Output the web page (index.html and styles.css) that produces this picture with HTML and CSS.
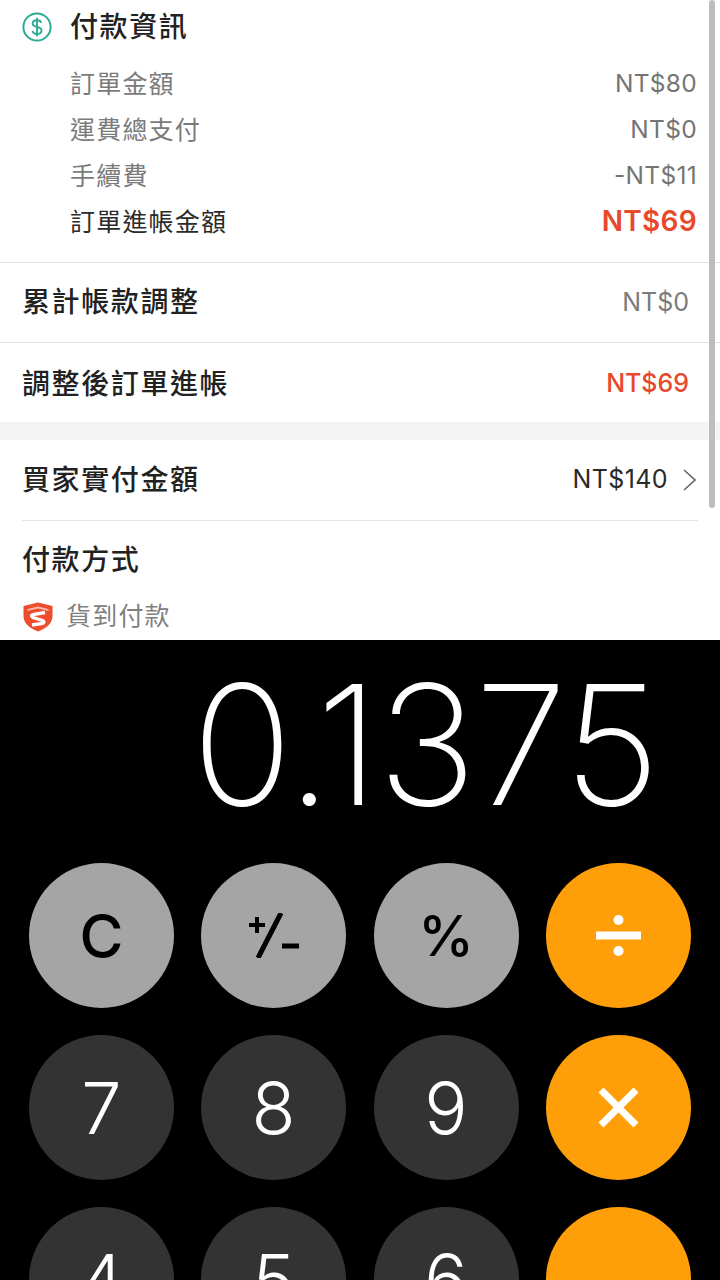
FILE: index.html
```html
<!DOCTYPE html>
<html lang="zh-Hant">
<head>
    <meta charset="UTF-8">
    <meta name="viewport" content="width=device-width, initial-scale=1.0">
    <title>付款資訊</title>
    <link rel="stylesheet" href="styles.css">
</head>
<body>

    <!-- Order payment panel -->
    <div class="panel">
        <div class="scrollbar"></div>

        <div class="section-head">
            <svg class="dollar-icon" viewBox="0 0 30 30">
                <circle cx="15" cy="15" r="13.6" fill="none" stroke="#2bab94" stroke-width="2"/>
                <path d="M19.2 10.8c-.5-1.7-2.2-2.6-4.2-2.6-2.400 0-4.300 1.300-4.300 3.400 0 2 1.700 2.800 4.300 3.400 2.700.6 4.500 1.400 4.500 3.500 0 2.200-2 3.500-4.500 3.500-2.200 0-4-1-4.500-2.900M15 5.800v18.400" fill="none" stroke="#2bab94" stroke-width="1.900"/>
            </svg>
            <span class="title">付款資訊</span>
        </div>

        <div class="detail-list">
            <div class="detail-row"><span class="label">訂單金額</span><span class="num">NT$80</span></div>
            <div class="detail-row"><span class="label">運費總支付</span><span class="num">NT$0</span></div>
            <div class="detail-row"><span class="label">手續費</span><span class="num">-NT$11</span></div>
            <div class="detail-row total"><span class="label">訂單進帳金額</span><span class="num">NT$69</span></div>
        </div>

        <div class="row row-border">
            <span class="title">累計帳款調整</span>
            <span class="num grey">NT$0</span>
        </div>
        <div class="row row-low">
            <span class="title">調整後訂單進帳</span>
            <span class="num red">NT$69</span>
        </div>

        <div class="gap"></div>

        <div class="buyer-row">
            <span class="title">買家實付金額</span>
            <span class="buyer-value">
                <span class="num dark">NT$140</span>
                <svg class="chevron" viewBox="0 0 13 22"><path d="M1 1 12 11 1 21" fill="none" stroke="#666" stroke-width="1.600"/></svg>
            </span>
        </div>

        <div class="method">
            <span class="title">付款方式</span>
            <div class="method-line">
                <svg class="shield" viewBox="0 0 30 30">
                    <path d="M15 .5 29.500 4V14C29.500 21.500 23 26.500 15 29.500 7 26.500.5 21.500.5 14V4Z" fill="#ee4d2d"/>
                    <path d="M15 4.500 25.500 7V9L15 6.500 4.500 9V7Z" fill="#fff" opacity=".6"/>
                    <path d="M22 10.500 10 12.500C8 13 8 14.500 10 15.500L19.500 18.500C21.500 19.500 21.500 20.500 19.500 21.500L9 23" fill="none" stroke="#fff" stroke-width="3.300"/>
                </svg>
                <span class="label">貨到付款</span>
            </div>
        </div>
    </div>

    <!-- Calculator -->
    <div class="calc">
        <div class="display">0.1375</div>
        <div class="keys">
            <div class="key light">C</div>
            <div class="key light">
                <svg class="plusminus" viewBox="0 0 50 45">
                    <path d="M8 4v16M0 12h16" stroke="#000" stroke-width="4" fill="none"/>
                    <path d="M9 45 32 0" stroke="#000" stroke-width="5" fill="none"/>
                    <path d="M33 33h17" stroke="#000" stroke-width="5" fill="none"/>
                </svg>
            </div>
            <div class="key light percent">%</div>
            <div class="key orange">
                <svg class="divide" viewBox="0 0 45 41">
                    <circle cx="22.500" cy="5" r="5" fill="#fff"/>
                    <rect x="0" y="16.500" width="45" height="8" fill="#fff"/>
                    <circle cx="22.500" cy="36" r="5" fill="#fff"/>
                </svg>
            </div>
            <div class="key dark">7</div>
            <div class="key dark">8</div>
            <div class="key dark">9</div>
            <div class="key orange">
                <svg class="times" viewBox="0 0 41 41">
                    <path d="M3 3 38 38M38 3 3 38" stroke="#fff" stroke-width="7" fill="none"/>
                </svg>
            </div>
            <div class="key dark">4</div>
            <div class="key dark">5</div>
            <div class="key dark">6</div>
            <div class="key orange"></div>
        </div>
    </div>

</body>
</html>
```

FILE: styles.css
```css
* {
    margin: 0;
    padding: 0;
    box-sizing: border-box;
}

body {
    width: 720px;
    height: 1280px;
    overflow: hidden;
    background: #000;
    font-family: 'Inter', 'Noto Sans CJK TC', sans-serif;
}

/* Payment panel */
.panel {
    position: relative;
    height: 640px;
    overflow: hidden;
    background: #fff;
    display: flex;
    flex-direction: column;
}

.scrollbar {
    position: absolute;
    top: 0;
    left: 709px;
    width: 6px;
    height: 508px;
    border-radius: 3px;
    background: #bdbdbd;
}

.title {
    font-size: 28px;
    font-weight: 500;
    line-height: 34px;
    padding-bottom: 5px;
    letter-spacing: 1.600px;
    color: #222;
    font-family: 'Noto Sans CJK TC', sans-serif;
}

.label {
    font-family: 'Noto Sans CJK TC', sans-serif;
    font-size: 25px;
    letter-spacing: 1.200px;
    line-height: 30px;
    padding-bottom: 4px;
}

.num {
    font-size: 25px;
    font-weight: 400;
    padding-bottom: 2px;
}

.section-head {
    display: flex;
    align-items: center;
    height: 54px;
    padding-left: 22px;
    gap: 18px;
}

.dollar-icon {
    width: 30px;
    height: 30px;
}

.detail-list {
    padding: 7px 23px 17px 70px;
    border-bottom: 1px solid #e2e2e2;
}

.detail-row {
    display: flex;
    justify-content: space-between;
    align-items: center;
    height: 46px;
    color: #7b7b7b;
}

.detail-row .num {
    font-size: 24.500px;
    letter-spacing: 0.300px;
    color: #757575;
}

.total {
    color: #2a2a2a;
}

.detail-row.total .num {
    font-size: 28px;
    font-weight: 600;
    color: #e8492c;
}

.row {
    display: flex;
    justify-content: space-between;
    align-items: center;
    height: 79px;
    padding: 0 31px 0 22px;
}

.row-border {
    height: 80px;
    border-bottom: 1px solid #e2e2e2;
}

.row-low {
    padding-top: 3px;
}

.grey {
    color: #7b7b7b;
}

.red {
    color: #e8492c;
    font-weight: 500;
}

.gap {
    flex: none;
    height: 18px;
    background: #f4f4f4;
}

.buyer-row {
    display: flex;
    justify-content: space-between;
    align-items: center;
    height: 81px;
    margin: 0 22px 0 22px;
    border-bottom: 1px solid #e6e6e6;
}

.buyer-value {
    display: flex;
    align-items: center;
    gap: 15px;
}

.dark {
    color: #2a2a2a;
    letter-spacing: 0.400px;
}

.chevron {
    width: 13px;
    height: 22px;
    margin-right: 2px;
}

.method {
    padding: 20px 0 0 22px;
}

.method-line {
    display: flex;
    align-items: center;
    gap: 13px;
    margin-top: 24px;
    color: #808080;
}

.shield {
    width: 30px;
    height: 30px;
    margin: 1px 0 0 1px;
}

/* Calculator */
.calc {
    height: 640px;
    background: #000;
    overflow: hidden;
}

.display {
    height: 223px;
    padding-right: 62px;
    text-align: right;
    font-size: 167px;
    font-weight: 200;
    line-height: 209px;
    letter-spacing: -2px;
    color: #fff;
}

.keys {
    display: grid;
    grid-template-columns: repeat(4, 145px);
    grid-auto-rows: 145px;
    column-gap: 27.300px;
    row-gap: 27px;
    padding-left: 29px;
}

.key {
    display: flex;
    align-items: center;
    justify-content: center;
    border-radius: 50%;
    font-size: 72px;
    font-weight: 350;
}

.key.light {
    background: #a5a5a5;
    color: #000;
    font-size: 60px;
    font-weight: 500;
}

.key.dark {
    background: #333;
    color: #fff;
}

.key.orange {
    background: #fe9f0a;
}

.key.percent {
    font-size: 56px;
}

.plusminus {
    width: 50px;
    height: 45px;
}

.divide {
    width: 45px;
    height: 41px;
}

.times {
    width: 41px;
    height: 41px;
}
```
